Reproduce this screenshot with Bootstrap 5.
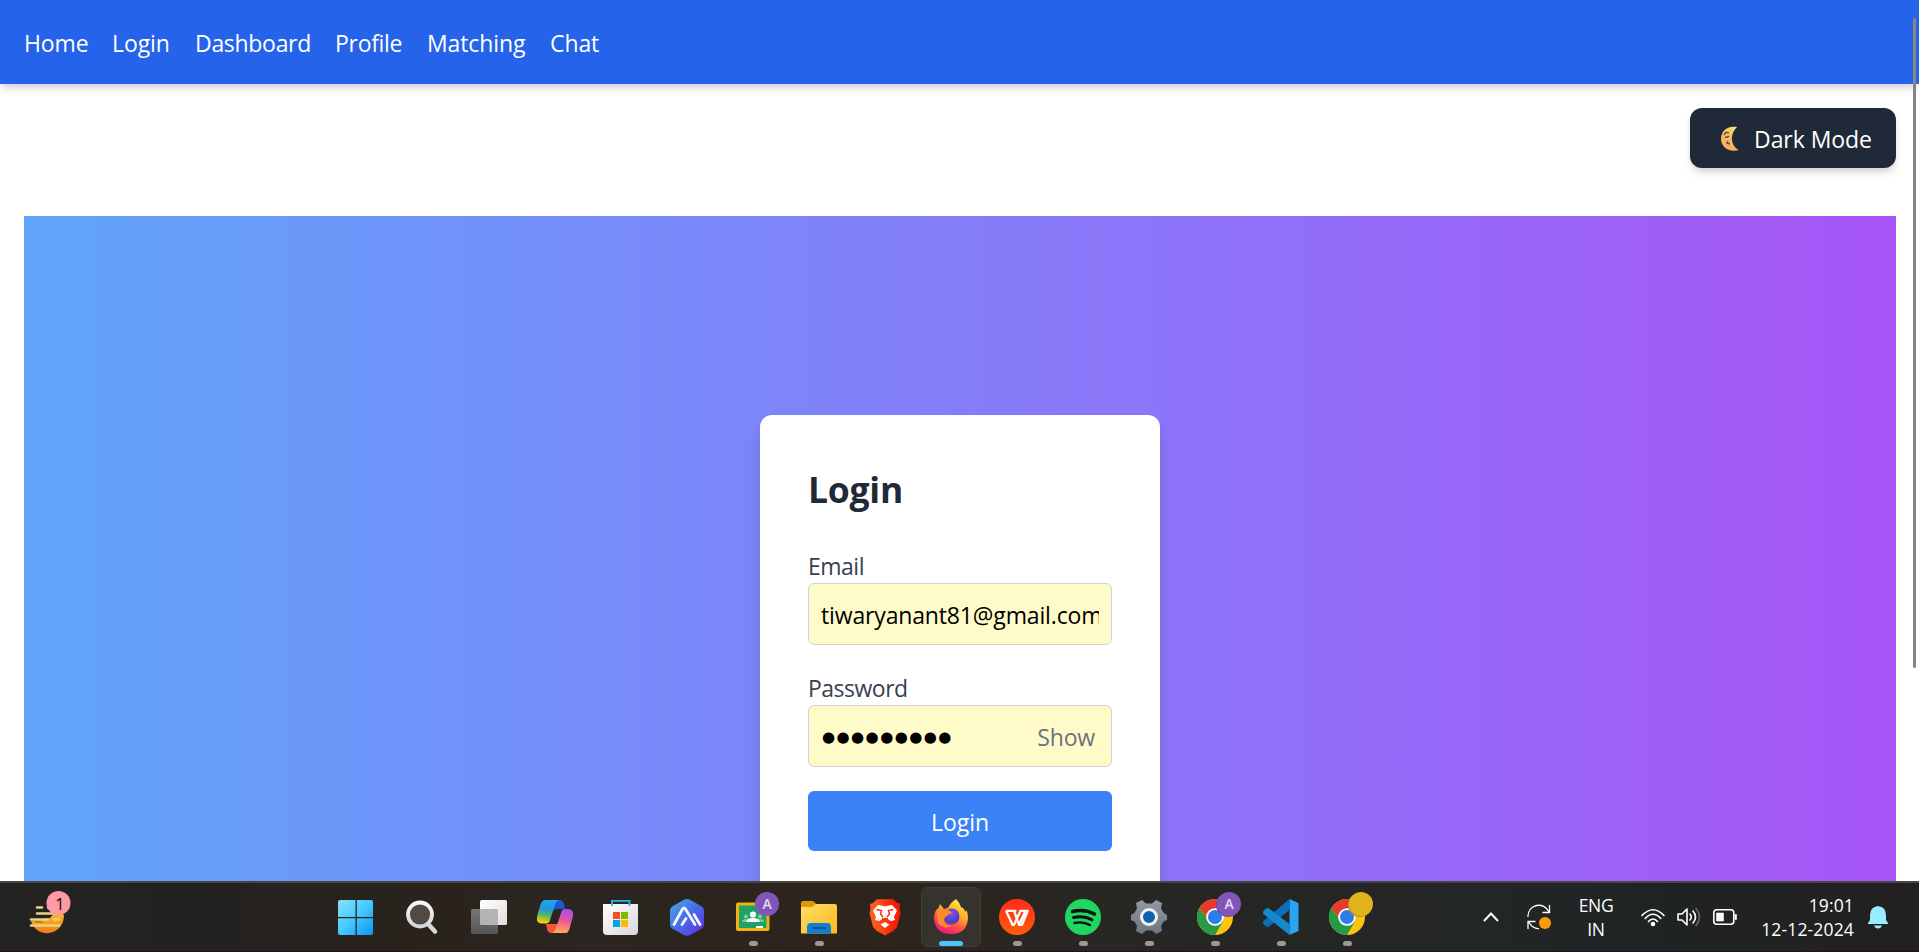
<!DOCTYPE html>
<html lang="en">
<head>
<meta charset="utf-8">
<title>Login</title>
<link href="https://cdn.jsdelivr.net/npm/bootstrap@5.3.0/dist/css/bootstrap.min.css" rel="stylesheet">
<style>
  html, body { height: 100%; }
  body { font-family: "Open Sans", "Noto Sans", sans-serif; font-size: 23px; line-height: 36px; color: #000; letter-spacing: -.4px; background: #fff; }
  .screen { height: 952px; width: 100%; }
  .topbar { height: 84px; padding: 2px 24px 0; background: #2563eb; box-shadow: 0 6px 9px -1.5px rgba(0,0,0,.13), 0 3px 6px -2px rgba(0,0,0,.1); position: relative; }
  .topbar .nav-link { padding: 0; color: #fff; white-space: nowrap; letter-spacing: -.1px; }
  .topbar .nav-link.tight { letter-spacing: -.3px; }
  .theme-btn { width: 206px; height: 60px; margin: 24px 23px 48px auto; padding: 2px 24px 0 30px; letter-spacing: -.05px; border-radius: 12px; background: #1f2937; color: #fff; box-shadow: 0 6px 9px -1.5px rgba(0,0,0,.12), 0 3px 6px -2px rgba(0,0,0,.1); }
  .hero { margin: 0 23px 0 24px; padding-top: 199px; background: linear-gradient(90deg, #60a5fa, #a855f7); min-height: 0; }
  .login-card { width: 400px; height: 600px; padding: 48px; border-radius: 12px; background: #fff; box-shadow: 0 15px 22px -4px rgba(0,0,0,.12), 0 6px 12px -3px rgba(0,0,0,.1); }
  .login-card h2 { font-size: 35.500px; line-height: 48px; font-weight: 700; color: #1f2937; margin: 0 0 36px; padding-top: 2px; height: 48px; letter-spacing: -.25px; }
  .login-card label { display: block; color: #374151; height: 36px; padding-top: 1px; letter-spacing: -.5px; }
  .login-card .form-control { height: 62px; padding: 2px 12px 0; border: 1px solid #d1d5db; border-radius: 6px; background: #fffbc8; color: #000; font-size: 23px; letter-spacing: -.15px; }
  .login-card .secret { font-family: "DejaVu Sans", sans-serif; font-size: 15px; letter-spacing: 1.450px; padding-left: 13px; }
  .show-btn { position: absolute; right: 17px; top: 14px; color: #6b7280; letter-spacing: -.15px; }
  .login-btn { height: 60px; border-radius: 6px; background: #3b82f6; color: #fff; font-size: 23px; letter-spacing: 0; padding: 2px 0 0; border: 0; }
  .scroll-thumb { position: absolute; left: 1913px; top: 18px; width: 3px; height: 650px; border-radius: 2px; background: #868686; }
  .taskbar { height: 71px; border-top: 2px solid #474643; border-bottom: 1px solid #20121a; background: linear-gradient(90deg, #232321 0%, #242220 12%, #2a231c 22%, #2b2621 31%, #2e241b 45%, #272724 58%, #222625 78%, #202424 84%, #222020 100%); color: #fff; position: relative; }
  .taskbar svg { display: block; overflow: visible; }
  .widget { width: 324px; padding: 8px 0 0 30px; }
  .app { width: 66px; height: 68px; padding-top: 17px; position: relative; }
  .app.is-active::before { content: ""; position: absolute; left: 3px; top: 4px; width: 60px; height: 60px; border-radius: 7px; background: #36322d; border: 1px solid #423e39; }
  .app svg { position: relative; margin-left: 16px; }
  .app.start svg { margin-left: 15px; }
  .app.is-open::after { content: ""; position: absolute; left: 29px; top: 58px; width: 9px; height: 5px; border-radius: 3px; background: #9c9894; }
  .app.is-active::after { left: 21px; width: 24px; background: #4cc2ff; }
  .tray { font-size: 17.500px; line-height: 24px; letter-spacing: -.3px; }
  .clock { letter-spacing: .15px; }
  .tray-inner { padding-right: 31px; }
</style>
</head>
<body>
<div class="screen d-flex flex-column overflow-hidden position-relative">
  <nav class="topbar nav d-flex align-items-center flex-nowrap flex-shrink-0">
    <a class="nav-link" style="width:88px" href="#">Home</a>
    <a class="nav-link" style="width:83px" href="#">Login</a>
    <a class="nav-link tight" style="width:140px" href="#">Dashboard</a>
    <a class="nav-link tight" style="width:92px" href="#">Profile</a>
    <a class="nav-link" style="width:123px" href="#">Matching</a>
    <a class="nav-link" href="#">Chat</a>
  </nav>

  <div class="theme-btn d-flex align-items-center justify-content-between flex-shrink-0 text-nowrap">
    <svg width="20" height="26" viewBox="0 0 20 26"><defs><linearGradient id="moon" x1=".8" y1="0" x2=".3" y2="1"><stop offset="0" stop-color="#ffdc73"/><stop offset=".5" stop-color="#f8bc68"/><stop offset="1" stop-color="#fba956"/></linearGradient></defs><path d="M17 1C6-.5 1 6 1 13c0 8 8 14 18 11-8-4-10-15-2-23z" fill="url(#moon)"/><path d="M4 9q2-4 5-2M5 11q2 1 4-1M8 15l-1 2 3 1" fill="none" stroke="#6a4530" stroke-width="1.4"/></svg>
    <span>Dark Mode</span>
  </div>

  <main class="hero flex-grow-1 d-flex justify-content-center align-items-start overflow-hidden">
    <form class="login-card flex-shrink-0">
      <h2>Login</h2>
      <div class="mb-4">
        <label for="email">Email</label>
        <input id="email" class="form-control" type="text" value="tiwaryanant81@gmail.com">
      </div>
      <div class="mb-4 position-relative">
        <label for="pass">Password</label>
        <div class="position-relative">
          <input id="pass" class="form-control secret" type="text" value="●●●●●●●●●">
          <span class="show-btn">Show</span>
        </div>
      </div>
      <button type="button" class="btn login-btn w-100">Login</button>
    </form>
  </main>

  <footer class="taskbar d-flex flex-shrink-0">
    <div class="widget flex-shrink-0">
      <svg width="41" height="44" viewBox="0 0 41 44"><defs><linearGradient id="sun" x1="0" y1="0" x2="0" y2="1"><stop offset="0" stop-color="#f9c62f"/><stop offset="1" stop-color="#f07a16"/></linearGradient></defs><path d="M1 30C6 48 34 46 34 24L26 20 20 27z" fill="url(#sun)"/><path d="M7 16.5h5M18 16.5h6M7 22.500h18M1 28.500h17M24 28.500h5M1 34.500h28" stroke="#ecd084" stroke-width="2.600" stroke-linecap="round"/><path d="M5 30.700h7" stroke="#a9722c" stroke-width="1.500"/><circle cx="28.500" cy="12" r="12" fill="#ff99a4"/><text x="25" y="18.500" font-size="17" fill="#111" font-family="Open Sans">1</text></svg>
    </div>

    <div class="app start"><svg width="36" height="36" viewBox="0 0 36 36"><defs><linearGradient id="win" gradientUnits="userSpaceOnUse" x1="0" y1="0" x2="34" y2="35"><stop offset="0" stop-color="#89dffd"/><stop offset=".5" stop-color="#43c8ff"/><stop offset="1" stop-color="#0f93f7"/></linearGradient></defs><path d="M1 0h15.500v17H-1V2q0-2 2-2zM17.800 0H32q2 0 2 2v15H17.800zM-1 18.300h17.500V35H1q-2 0-2-2zM17.800 18.300H34V33q0 2-2 2H17.800z" fill="url(#win)"/></svg></div>
    <div class="app"><svg width="36" height="36" viewBox="0 0 36 36"><defs><linearGradient id="mag" x1="0" y1="0" x2="0" y2="1"><stop offset="0" stop-color="#fafafa"/><stop offset="1" stop-color="#d3d6dc"/></linearGradient></defs><path d="M23 25l6 6.500" stroke="#d5d8de" stroke-width="4.600" stroke-linecap="round"/><circle cx="14" cy="14.500" r="12" fill="#4f4a44" stroke="url(#mag)" stroke-width="3.800"/></svg></div>
    <div class="app"><svg width="36" height="36" viewBox="0 0 36 36"><defs><linearGradient id="tv" x1="0" y1="0" x2="1" y2="1"><stop offset="0" stop-color="#fff"/><stop offset="1" stop-color="#dedede"/></linearGradient><linearGradient id="tv2" x1="0" y1="0" x2="0" y2="1"><stop offset="0" stop-color="#777"/><stop offset="1" stop-color="#555"/></linearGradient></defs><rect x="8" y="0" width="27" height="25" rx="1.500" fill="url(#tv)"/><rect x="-1" y="9" width="27" height="25" rx="1.500" fill="url(#tv2)"/><path d="M8 9h18v16H9.500Q8 25 8 23.500z" fill="#b4b4b4"/></svg></div>
    <div class="app"><svg width="36" height="36" viewBox="0 0 36 36"><defs><linearGradient id="co1" x1=".6" y1="0" x2=".4" y2="1"><stop offset="0" stop-color="#1ba7ee"/><stop offset=".4" stop-color="#2495d8"/><stop offset=".65" stop-color="#54b468"/><stop offset="1" stop-color="#ffd500"/></linearGradient><linearGradient id="co2" x1=".6" y1="0" x2=".4" y2="1"><stop offset="0" stop-color="#a64df2"/><stop offset=".5" stop-color="#ef5a90"/><stop offset="1" stop-color="#ffab5b"/></linearGradient></defs><path d="M16 0h5q4 0 5 4l1 5h-8q-4 0-5 4z" fill="#1b57d8"/><path d="M11 33h6l4-9H8l1 5q1 4 4 4z" fill="#f4573c"/><path d="M7 0h14q-3 1-4 5l-5 15q-1 3.500-4 3.500H4q-6 0-5-7L2 6q1.500-6 5-6z" fill="url(#co1)"/><path d="M28 33H14q3-1 4-5l5-15q1-4 4-4h3q6 0 5 7l-3 11q-1.500 6-4 6z" fill="url(#co2)"/></svg></div>
    <div class="app"><svg width="36" height="36" viewBox="0 0 36 36"><defs><linearGradient id="st" x1="0" y1="0" x2="1" y2="1"><stop offset="0" stop-color="#fff"/><stop offset="1" stop-color="#d6d6d6"/></linearGradient></defs><path d="M-1 4h35v27q0 4-4 4H3q-4 0-4-4z" fill="url(#st)"/><path d="M8 6V.9h17.500V6" fill="none" stroke="#27b6ec" stroke-width="1.900"/><path d="M9 12h7v7H9z" fill="#f25022"/><path d="M17 12h7v7h-7z" fill="#7fba00"/><path d="M9 20h7v7H9z" fill="#00a4ef"/><path d="M17 20h7v7h-7z" fill="#ffb900"/></svg></div>
    <div class="app"><svg width="36" height="36" viewBox="0 0 36 36"><defs><linearGradient id="hx" x1="0" y1="0" x2="1" y2="1"><stop offset="0" stop-color="#49a8e8"/><stop offset=".5" stop-color="#466ee6"/><stop offset="1" stop-color="#6a22f0"/></linearGradient></defs><path d="M14-.3q3-1.500 6 0l11 6.300q3 1.500 3 5v13q0 3.500-3 5l-11 6q-3 1.500-6 0L3 29q-3-1.500-3-5V11q0-3.500 3-5z" fill="url(#hx)"/><path d="M4 24.500L12.500 9Q14 7 15.500 9L25 24.500M12 24.500l4-6M24 14.500l6 10" fill="none" stroke="#f1f6ff" stroke-width="2.800" stroke-linecap="round"/></svg></div>
    <div class="app is-open"><svg width="36" height="36" viewBox="0 0 36 36"><rect x="0" y="2.500" width="33.500" height="28.500" rx="2" fill="#f2b212"/><path d="M3 5.500h27.500V28H3z" fill="#1ea362"/><circle cx="17" cy="14.500" r="3.100" fill="#fff"/><path d="M10 22q0-4 7-4t7 4z" fill="#fff"/><g fill="#86cba8"><circle cx="10" cy="16.500" r="2"/><circle cx="24" cy="16.500" r="2"/><path d="M6 22q0-3 5-3l-2 3zM28 22q0-3-5-3l2 3z"/></g><path d="M20 26h7v2h-7z" fill="#fff"/><circle cx="31" cy="4" r="12" fill="#8057b9"/><text x="31" y="9" text-anchor="middle" font-size="14" font-weight="600" fill="#e6daf5" font-family="Open Sans">A</text></svg></div>
    <div class="app is-open"><svg width="36" height="36" viewBox="0 0 36 36"><defs><linearGradient id="fo" x1="0" y1="0" x2="1" y2="1"><stop offset="0" stop-color="#ffdc6a"/><stop offset="1" stop-color="#fdb91c"/></linearGradient></defs><path d="M-1 3q0-2 2-2h9q1.500 0 2.500 1.200L15 5v5H-1z" fill="#dc9a06"/><path d="M-1 7h11l4-3h19q2 0 2 2v27.500H-1z" fill="url(#fo)"/><path d="M5 33.500V27q0-4 4-4h16q4 0 4 4v6.500z" fill="#0d7fd4"/><path d="M10 28h14" stroke="#0b4f94" stroke-width="2"/></svg></div>
    <div class="app"><svg width="36" height="36" viewBox="0 0 36 36"><defs><linearGradient id="br"><stop offset=".2" stop-color="#ff5a1c"/><stop offset=".8" stop-color="#f81e06"/></linearGradient></defs><path d="M9-.8h16l4 3.800 3 .5L31.500 10l1 3-3.500 14-4 4-8 4.500L9 31l-4-4L1.500 13l1-3L2 4l3-1z" fill="url(#br)"/><path d="M10 5l7 1.200L24 5l5 5.500-3 6.500 1 3-4 1-6-3.500-6 3.500-4-1 1-3-3-6.500z" fill="#fff"/><path d="M8.500 9.500l5 1-1 3.500 2.500 3M25.500 9.500l-5 1 1 3.500-2.500 3M14 18.500l3 1 3-1" fill="none" stroke="#f6360d" stroke-width="1.500"/><path d="M12.500 24.500l4.500-2.500 4.500 2.500L17 28z" fill="#fff"/></svg></div>
    <div class="app is-open is-active"><svg width="36" height="36" viewBox="0 0 36 36"><defs><linearGradient id="ff" x1=".8" y1="0" x2=".3" y2="1"><stop offset="0" stop-color="#fff04a"/><stop offset=".4" stop-color="#ffae27"/><stop offset=".7" stop-color="#ff4d44"/><stop offset="1" stop-color="#e9148b"/></linearGradient><radialGradient id="fg" cx=".5" cy=".3"><stop offset="0" stop-color="#8d4ce8"/><stop offset="1" stop-color="#4a43c4"/></radialGradient></defs><path d="M22-1q4 4 5 8 3 1 4.500 5l1-2Q34 14 34 18q-1 16-17 16T0 18q0-7 4.500-10L6 4l4 5 4-1q3-6 8-9z" fill="url(#ff)"/><circle cx="17.500" cy="16.500" r="8" fill="url(#fg)"/><path d="M4 10q5-2 11 0l3 3q-4 1-5 3-3 1-3 5 1 5 8 5-9 4-14-3-2-6 0-13z" fill="#ff8a2a"/></svg></div>
    <div class="app is-open"><svg width="36" height="36" viewBox="0 0 36 36"><defs><linearGradient id="wp" x1="0" y1="0" x2="0" y2="1"><stop offset="0" stop-color="#ff2a1d"/><stop offset="1" stop-color="#ff5d0a"/></linearGradient></defs><circle cx="17" cy="17" r="18" fill="url(#wp)"/><path d="M6 10.800h9.500l-1.500 0 5 14 6.500-14h-5l-6.500 14h-1.500L6 10.800M20.500 10.800h7.300L22 24.800h-3" fill="none" stroke="#fff" stroke-width="2.300" stroke-linejoin="round"/></svg></div>
    <div class="app is-open"><svg width="36" height="36" viewBox="0 0 36 36"><circle cx="17" cy="17" r="18" fill="#1ed760"/><g fill="none" stroke="#111" stroke-linecap="round"><path d="M6.500 11.500q12-3 22 2.500" stroke-width="3.600"/><path d="M7.500 17.500q10-2.500 18.500 2.300" stroke-width="3"/><path d="M8.500 23q8.500-2 15.500 2" stroke-width="2.400"/></g></svg></div>
    <div class="app is-open"><svg width="36" height="36" viewBox="0 0 36 36"><defs><linearGradient id="ge" x1="0" y1="0" x2="0" y2="1"><stop offset="0" stop-color="#9299a1"/><stop offset="1" stop-color="#6d7781"/></linearGradient></defs><path d="M10 0l4 3.500h6L24 0l6 3-1 5.500 2.500 4.200L35 15v5l-3.500 1.500L29 26l1 5-6 3-4-3.500h-6L10 34l-6-3 1-5-2.500-4.500L-1 20v-5l3.500-2.300L5 8.500 4 3z" fill="url(#ge)"/><circle cx="17" cy="17" r="7.500" fill="#0d63b2" stroke="#f2f2f2" stroke-width="3"/></svg></div>
    <div class="app is-open"><svg width="36" height="36" viewBox="0 0 36 36"><circle cx="17" cy="17" r="18" fill="#ffc30d"/><path d="M17 17h-9L1.400 8A18 18 0 0 1 32.600 8H17z" fill="#e33b2e"/><path d="M1.400 8A18 18 0 0 0 17 35l8-13.500-8-4.500-7 3z" fill="#269a45"/><circle cx="17" cy="17" r="8.800" fill="#fff"/><circle cx="17" cy="17" r="7" fill="#2f7cec"/><circle cx="30" cy="5" r="12" fill="#7448a8"/><circle cx="31" cy="4" r="12" fill="#8057b9"/><text x="31" y="9" text-anchor="middle" font-size="14" font-weight="600" fill="#e6daf5" font-family="Open Sans">A</text></svg></div>
    <div class="app is-open"><svg width="36" height="36" viewBox="0 0 36 36"><path d="M25.500-1L34.500 3v28l-9 4z" fill="#28a5f2"/><path d="M25.500-1v11L5 26.500q-2 1-3.500-.5L-.5 24q-1-1.500 0-3z" fill="#0a6eb8"/><path d="M25.500 35V24L5 8.500q-2-1-3.500.5l-2 2q-1 1.500 0 3z" fill="#1588d0"/></svg></div>
    <div class="app is-open"><svg width="36" height="36" viewBox="0 0 36 36"><circle cx="17" cy="17" r="18" fill="#ffc30d"/><path d="M17 17h-9L1.400 8A18 18 0 0 1 32.600 8H17z" fill="#e33b2e"/><path d="M1.400 8A18 18 0 0 0 17 35l8-13.500-8-4.500-7 3z" fill="#269a45"/><circle cx="17" cy="17" r="8.800" fill="#fff"/><circle cx="17" cy="17" r="7" fill="#2f7cec"/><circle cx="30" cy="5" r="12" fill="#b8921b"/><circle cx="31" cy="4" r="12" fill="#e3b31d"/></svg></div>

    <div class="tray ms-auto d-flex align-items-center tray-inner text-nowrap">
      <svg width="16" height="10" viewBox="0 0 16 10"><path d="M1 9l7-7.500L15 9" fill="none" stroke="#fff" stroke-width="1.900"/></svg>
      <svg style="margin-left:28px" width="24" height="26" viewBox="0 0 24 26"><path d="M.8 13C1 0 17-3 22 8M22.500 1v7.500h-7M1 25v-7.500h7.500M2 18.500Q6 25 12 24.500" fill="none" stroke="#fff" stroke-width="1.300"/><circle cx="18" cy="19" r="6" fill="#ff9a0c"/></svg>
      <div class="text-center" style="margin-left:27px;width:36px">ENG<br>IN</div>
      <svg style="margin-left:27px" width="24" height="19" viewBox="0 0 24 19"><g fill="none" stroke="#fff" stroke-width="1.600"><path d="M.6 8Q12-4.500 23.400 8M3.800 11Q12 1.500 20.200 11M7 14q5-6 10 0"/></g><circle cx="12" cy="16" r="2.300" fill="#fff"/></svg>
      <svg style="margin-left:12px" width="24" height="20" viewBox="0 0 24 20"><g fill="none" stroke="#fff" stroke-width="1.600" stroke-linecap="round"><path d="M1 7h4l5-5v16l-5-5H1z" stroke-linejoin="round"/><path d="M13 7q2.500 3 0 6M16 4q5 6 0 12"/><path d="M19 1.500q7 8.500 0 17" stroke="#666"/></g></svg>
      <svg style="margin-left:12px" width="24" height="16" viewBox="0 0 24 16"><rect x=".8" y=".8" width="20" height="14.400" rx="3" fill="none" stroke="#fff" stroke-width="1.600"/><path d="M3.500 4h7v8h-7zM22 5.500h1.500v5H22z" fill="#fff" stroke="#fff" stroke-width=".6"/></svg>
      <div class="clock text-end" style="margin-left:20px;width:97px">19:01<br>12-12-2024</div>
      <svg style="margin-left:14px" width="20" height="24" viewBox="0 0 20 24"><path d="M10 1q8 1 8 9v5l2 3v1H0v-1l2-3v-5q0-8 8-9zM6 20.500h8q-1 3-4 3t-4-3z" fill="#99ebff"/></svg>
    </div>
  </footer>
  <div class="scroll-thumb"></div>
</div>
<script src="https://cdn.jsdelivr.net/npm/bootstrap@5.3.0/dist/js/bootstrap.bundle.min.js"></script>
</body>
</html>
